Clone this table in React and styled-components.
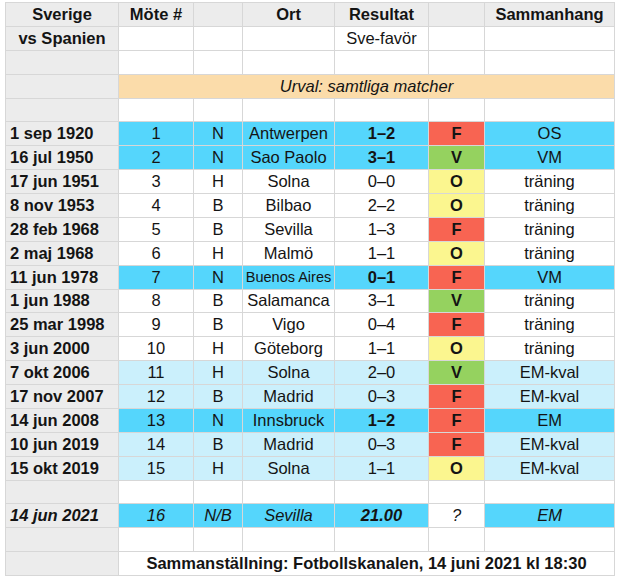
import React from "react";
import styled, { createGlobalStyle } from "styled-components";

const Global = createGlobalStyle`
  body {
    margin: 0;
    background: #fff;
    font-family: "Liberation Sans", Arial, Helvetica, sans-serif;
  }
`

const fills = {
    white: "#ffffff",
    gray: "#ececec",
    blue: "#55d6fc",
    light: "#cbf0fc",
    orange: "#fbdcaa",
    red: "#f86452",
    green: "#95d25f",
    yellow: "#fbf68f",
}

const Sheet = styled.div`
  margin: 2px 0 0 5px;
  width: 610px;
  display: grid;
  grid-template-columns: 112px 74px 48px 91px 93px 55px 129px;
  grid-auto-rows: 22.875px;
  gap: 1px;
  padding: 1px;
  box-sizing: border-box;
  background: #d7d7d7;
  color: #141414;
  font-size: 16.5px;
`

const Cell = styled.div`
  grid-column: ${p => (p.$span ? `span ${p.$span}` : "auto")};
  background: ${p => fills[p.$bg || "white"]};
  display: flex;
  align-items: center;
  justify-content: ${p => (p.$left ? "flex-start" : "center")};
  padding: 0 ${p => (p.$left ? "4px" : "0")};
  font-weight: ${p => (p.$bold ? 700 : 400)};
  font-style: ${p => (p.$italic ? "italic" : "normal")};
  font-size: ${p => (p.$small ? "14.5px" : "inherit")};
  white-space: nowrap;
  overflow: hidden;
`

const resultFill = { F: "red", V: "green", O: "yellow" }

const matches = [
    ["1 sep 1920", 1, "N", "Antwerpen", "1–2", "F", "OS", "blue"],
    ["16 jul 1950", 2, "N", "Sao Paolo", "3–1", "V", "VM", "blue"],
    ["17 jun 1951", 3, "H", "Solna", "0–0", "O", "träning", "white"],
    ["8 nov 1953", 4, "B", "Bilbao", "2–2", "O", "träning", "white"],
    ["28 feb 1968", 5, "B", "Sevilla", "1–3", "F", "träning", "white"],
    ["2 maj 1968", 6, "H", "Malmö", "1–1", "O", "träning", "white"],
    ["11 jun 1978", 7, "N", "Buenos Aires", "0–1", "F", "VM", "blue"],
    ["1 jun 1988", 8, "B", "Salamanca", "3–1", "V", "träning", "white"],
    ["25 mar 1998", 9, "B", "Vigo", "0–4", "F", "träning", "white"],
    ["3 jun 2000", 10, "H", "Göteborg", "1–1", "O", "träning", "white"],
    ["7 okt 2006", 11, "H", "Solna", "2–0", "V", "EM-kval", "light"],
    ["17 nov 2007", 12, "B", "Madrid", "0–3", "F", "EM-kval", "light"],
    ["14 jun 2008", 13, "N", "Innsbruck", "1–2", "F", "EM", "blue"],
    ["10 jun 2019", 14, "B", "Madrid", "0–3", "F", "EM-kval", "light"],
    ["15 okt 2019", 15, "H", "Solna", "1–1", "O", "EM-kval", "light"],
]

const EmptyRow = () => (
    <>
        <Cell $bg="gray" />
        {[0, 1, 2, 3, 4, 5].map(i => <Cell key={i} />)}
    </>
)

const MatchRow = ({ m }) => {
    const [date, no, venue, place, score, res, context, tone] = m
    return (
        <>
            <Cell $bg="gray" $bold $left>{date}</Cell>
            <Cell $bg={tone}>{no}</Cell>
            <Cell $bg={tone}>{venue}</Cell>
            <Cell $bg={tone} $small={place.length > 10}>{place}</Cell>
            <Cell $bg={tone} $bold={tone === "blue"}>{score}</Cell>
            <Cell $bg={resultFill[res]} $bold>{res}</Cell>
            <Cell $bg={tone}>{context}</Cell>
        </>
    )
}

const App = () => {
    return (
        <>
            <Global />
            <Sheet>
                <Cell $bg="gray" $bold>Sverige</Cell>
                <Cell $bg="gray" $bold>Möte #</Cell>
                <Cell $bg="gray" />
                <Cell $bg="gray" $bold>Ort</Cell>
                <Cell $bg="gray" $bold>Resultat</Cell>
                <Cell $bg="gray" />
                <Cell $bg="gray" $bold>Sammanhang</Cell>

                <Cell $bg="gray" $bold>vs Spanien</Cell>
                <Cell />
                <Cell />
                <Cell />
                <Cell>Sve-favör</Cell>
                <Cell />
                <Cell />

                <EmptyRow />

                <Cell $bg="gray" />
                <Cell $bg="orange" $span={6} $italic>Urval: samtliga matcher</Cell>

                <EmptyRow />

                {matches.map(m => <MatchRow key={m[1]} m={m} />)}

                <EmptyRow />

                <Cell $bg="gray" $bold $italic $left>14 jun 2021</Cell>
                <Cell $bg="blue" $italic>16</Cell>
                <Cell $bg="blue" $italic>N/B</Cell>
                <Cell $bg="blue" $italic>Sevilla</Cell>
                <Cell $bg="blue" $italic $bold>21.00</Cell>
                <Cell $italic>?</Cell>
                <Cell $bg="blue" $italic>EM</Cell>

                <EmptyRow />

                <Cell $bg="gray" />
                <Cell $span={6} $bold>Sammanställning: Fotbollskanalen, 14 juni 2021 kl 18:30</Cell>
            </Sheet>
        </>
    )
}

export default App;
